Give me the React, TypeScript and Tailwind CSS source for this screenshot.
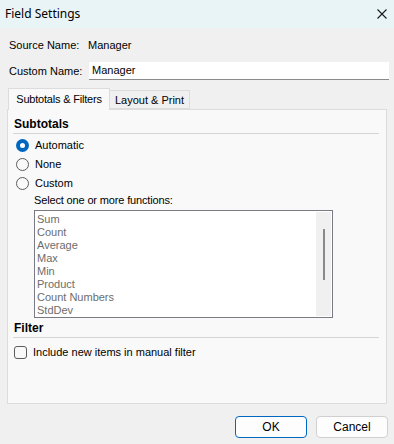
const functions = [
  "Sum",
  "Count",
  "Average",
  "Max",
  "Min",
  "Product",
  "Count Numbers",
  "StdDev",
];

const Radio = ({ label, checked }: { label: string; checked?: boolean }) => (
  <div className="flex items-center h-[19px] pl-[3px]">
    {checked ? (
      <span className="w-[13px] h-[13px] rounded-full bg-[#0067c0] flex items-center justify-center">
        <span className="w-[5px] h-[5px] rounded-full bg-white" />
      </span>
    ) : (
      <span className="w-[13px] h-[13px] rounded-full border border-[#5c5c5c] bg-[#f9f9f9]" />
    )}
    <span className="ml-[6px]">{label}</span>
  </div>
);

export default function App() {
  return (
    <div
      className="w-[394px] h-[444px] bg-[#f0f0f0] text-[11px] text-black flex flex-col"
      style={{ fontFamily: '"Liberation Sans", Arial, sans-serif' }}
    >
      {/* title bar */}
      <div className="h-[28px] bg-[#e9f4f7] flex items-center justify-between pl-[5px] pr-[6px]">
        <span className="text-[12px]" style={{ fontFamily: '"Noto Sans", sans-serif' }}>
          Field Settings
        </span>
        <svg width="10" height="10" viewBox="0 0 10 10" className="mr-[1px]">
          <path d="M0.5 0.5L9.5 9.5M9.5 0.5L0.5 9.5" stroke="#1a1a1a" strokeWidth="1.1" />
        </svg>
      </div>

      <div className="flex items-center h-[17px] mt-[9px] pl-[9px]">
        <span className="w-[79px]">Source Name:</span>
        <span>Manager</span>
      </div>
      <div className="flex items-center mt-[8px] pl-[9px]">
        <span className="w-[80px]">Custom Name:</span>
        <div className="w-[300px] h-[18px] bg-white border-b border-[#8a8a8a] flex items-center pl-[3px]">
          Manager
        </div>
      </div>

      {/* tabs */}
      <div className="flex items-end mt-[7px] pl-[8px] h-[22px]">
        <div className="w-[102px] h-[22px] bg-[#f9f9f9] border border-b-0 border-[#dcdcdc] flex items-center justify-center relative z-10 -mb-px tracking-[-0.2px]">
          Subtotals &amp; Filters
        </div>
        <div className="w-[80px] h-[19px] bg-[#f0f0f0] border border-l-0 border-[#dcdcdc] flex items-center justify-center pt-[1px]">
          Layout &amp; Print
        </div>
      </div>

      {/* panel */}
      <div className="ml-[7px] w-[380px] h-[295px] bg-[#f9f9f9] border border-[#dcdcdc] px-[5px] pt-[7px]">
        <div className="font-bold text-[12px] leading-[14px] pl-[1px]">Subtotals</div>
        <div className="h-px bg-[#d5d5d5] mt-[2px] mr-[2px]" />
        <div className="mt-[2px]">
          <Radio label="Automatic" checked />
          <Radio label="None" />
          <Radio label="Custom" />
        </div>
        <div className="pl-[21px] mt-[1px] leading-[13px] tracking-[-0.15px]">
          Select one or more functions:
        </div>
        <div className="ml-[21px] mt-[3px] w-[299px] h-[108px] bg-white border border-[#7a7a84] flex">
          <div className="flex-1 pl-[2px] pt-[2px] text-[#6d6d6d]">
            {functions.map((f) => (
              <div key={f} className="h-[13px] leading-[13px]">
                {f}
              </div>
            ))}
          </div>
          <div className="w-[15px] my-[1px] mr-[1px] bg-[#f0f0f0] flex justify-center pt-[17px]">
            <div className="w-[2px] h-[51px] bg-[#8a8a8a]" />
          </div>
        </div>
        <div className="font-bold text-[12px] leading-[14px] pl-[1px] mt-[3px]">Filter</div>
        <div className="h-px bg-[#d5d5d5] mt-[2px] mr-[2px]" />
        <div className="flex items-center mt-[6px] pl-[1px]">
          <span className="w-[13px] h-[13px] rounded-[3px] border border-[#5c5c5c] bg-[#f9f9f9]" />
          <span className="ml-[6px]">Include new items in manual filter</span>
        </div>
      </div>

      {/* buttons */}
      <div className="flex justify-end gap-[9px] pr-[6px] mt-[12px]">
        <button className="w-[72px] h-[22px] rounded-[4px] border border-[#0067c0] bg-[#fdfdfd] text-[12px]">
          OK
        </button>
        <button className="w-[72px] h-[22px] rounded-[4px] border border-[#d0d0d0] bg-[#fdfdfd] text-[12px]">
          Cancel
        </button>
      </div>
    </div>
  );
}
